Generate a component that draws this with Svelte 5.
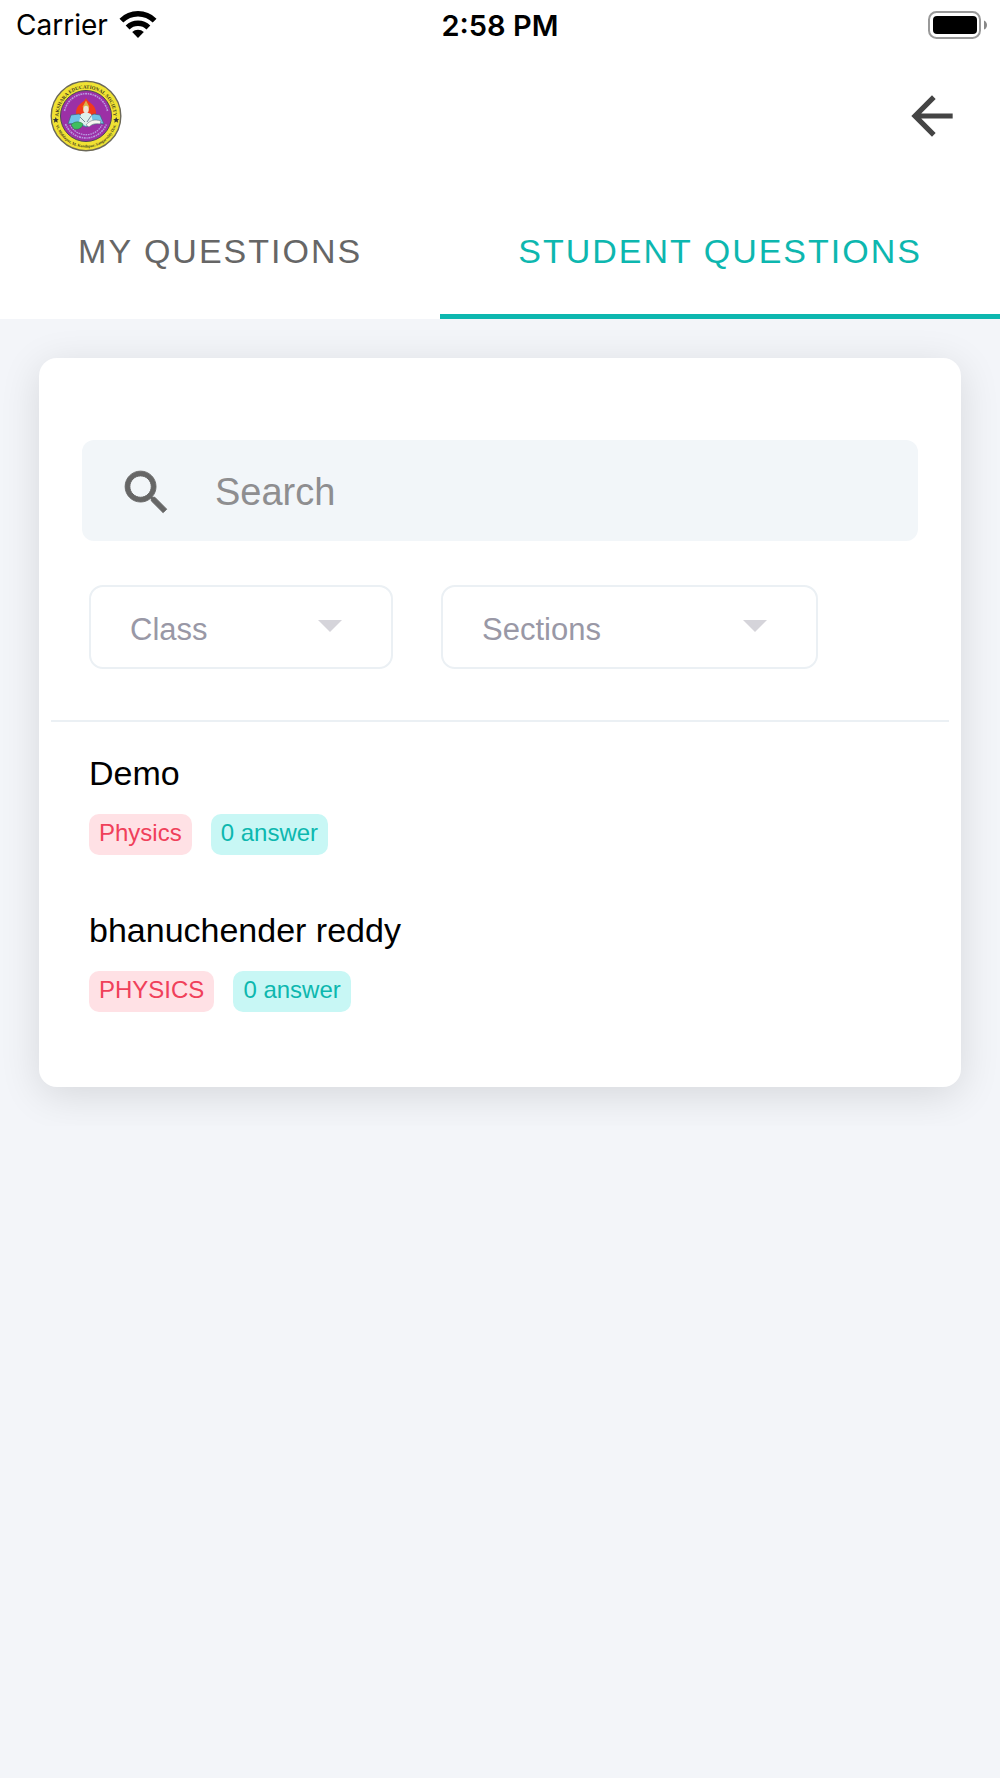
<script lang="ts">
  type Question = { id: number; student: string; subject: string; answers: number };

  const tabs = [
    { id: 'mine', label: 'My Questions' },
    { id: 'students', label: 'Student Questions' },
  ];

  const questions: Question[] = [
    { id: 1, student: 'Demo', subject: 'Physics', answers: 0 },
    { id: 2, student: 'bhanuchender reddy', subject: 'PHYSICS', answers: 0 },
  ];

  let active = $state('students');
  let search = $state('');

  const visible = $derived(
    questions.filter((q) => (q.student + ' ' + q.subject).toLowerCase().includes(search.trim().toLowerCase()))
  );
</script>

<svelte:head><title>Student Questions</title></svelte:head>

<div class="status">
  <span class="carrier">
    Carrier
    <svg width="38" height="28" viewBox="0 0 38 28" aria-hidden="true">
      <g fill="none" stroke="#000" stroke-width="5.4">
        <path d="M2.4 9.6a23.6 23.6 0 0 1 33.2 0" />
        <path d="M8.6 16.5a14.8 14.8 0 0 1 20.8 0" />
      </g>
      <path d="M19 27l-5.8-5.9a8.2 8.2 0 0 1 11.6 0z" />
    </svg>
  </span>
  <span class="time">2:58 PM</span>
  <svg class="battery" width="60" height="28" viewBox="0 0 60 28" aria-hidden="true">
    <rect x="1" y="1" width="51" height="26" rx="7.5" fill="none" stroke="#999" stroke-width="2" />
    <rect x="5" y="5" width="44" height="18" rx="4" />
    <path d="M56 9.4c4 1.6 4 7.6 0 9.2z" fill="#888" />
  </svg>
</div>

<header>
  <svg class="logo" width="72" height="72" viewBox="0 0 72 72" role="img" aria-label="Akshara Educational Society">
    <defs>
      <path id="ring-top" d="M10.5 46A27.4 27.4 0 1 1 61.5 46" />
      <path id="ring-bottom" d="M4.9 41A31.5 31.5 0 0 0 67.1 41" />
    </defs>
    <circle cx="36" cy="36" r="34.8" fill="#f0e233" stroke="#6b6859" stroke-width="1.4" />
    <circle cx="36" cy="36" r="25.5" fill="#9c30a6" stroke="#4a4a55" stroke-width="1" />
    <text class="ring big"><textPath href="#ring-top" startOffset="50%" text-anchor="middle">AKSHARA EDUCATIONAL SOCIETY</textPath></text>
    <text class="ring small"><textPath href="#ring-bottom" startOffset="50%" text-anchor="middle">Vi. Middapur, M. Kondapur, Sangareddy Dist.</textPath></text>
    <path d="M5.8 37l.9 2 2.1.2-1.6 1.4.5 2.1-1.9-1.1-1.9 1.1.5-2.1-1.6-1.4 2.1-.2z" fill="#333" />
    <path d="M66.2 37l.9 2 2.1.2-1.6 1.4.5 2.1-1.9-1.1-1.9 1.1.5-2.1-1.6-1.4 2.1-.2z" fill="#333" />
    <g fill="none" stroke="#b79be0">
      <path d="M14.5 31a22 22 0 0 1 43 0" stroke-width="1.6" stroke-dasharray="2 .8 1.2 .8" />
      <path d="M15.5 44a22 22 0 0 0 41 0" stroke-width="1.6" stroke-dasharray="2 .8 1.2 .8" />
      <path d="M20 45a18 18 0 0 0 32 0" stroke-width="1.3" stroke-dasharray="1.6 .8" />
    </g>
    <path d="M36 18c2 5 10 6 10 15 0 4-3 8-10 8s-10-4-10-8c0-9 8-10 10-15z" fill="#f23a1c" />
    <path d="M36 20.5l3.2 6-.6 5h-5.2l-.6-5z" fill="#d9b44a" />
    <path d="M21 35l8-1 7 4 8-4 6 1 4 9c-6-1-12 0-18 3-6-3-12-4-18-3z" fill="#6fc3e8" stroke="#42607c" stroke-width=".7" />
    <path d="M31 34l5-2 5 2 2 8-7 4-7-4z" fill="#dff0ec" />
    <ellipse cx="36" cy="29.5" rx="2.6" ry="3.8" fill="#efe3d8" />
    <path d="M21 45c3-4 9-4 12-1-1 4-4 6-9 5z" fill="#3fbf5f" stroke="#2f6b4a" stroke-width=".5" />
    <path d="M36 45c4-5 9-6 15-4l-1 3c-5-1-8 0-11 3z" fill="#f6f6f0" stroke="#667" stroke-width=".5" />
    <path d="M30 37l5 5M41 36l-4 6" stroke="#5a6b80" stroke-width=".8" />
  </svg>
  <button class="back" type="button" aria-label="Back">
    <svg width="62" height="62" viewBox="0 0 24 24" fill="#444" aria-hidden="true">
      <path d="M20 11H7.83l5.59-5.59L12 4l-8 8 8 8 1.41-1.41L7.83 13H20v-2z" />
    </svg>
  </button>
</header>

<div class="tabs" role="tablist">
  {#each tabs as tab}
    <button type="button" role="tab" class:active={active === tab.id} aria-selected={active === tab.id}
      onclick={() => (active = tab.id)}>{tab.label}</button>
  {/each}
</div>

<main>
  <section class="card">
    <label class="search">
      <svg width="57" height="57" viewBox="0 0 24 24" fill="#666" stroke="#666" stroke-width=".4" aria-hidden="true">
        <path d="M15.5 14h-.79l-.28-.27C15.41 12.59 16 11.11 16 9.5 16 5.91 13.09 3 9.5 3S3 5.91 3 9.5 5.91 16 9.5 16c1.61 0 3.09-.59 4.23-1.57l.27.28v.79l5 4.99L20.49 19l-4.99-5zm-6 0C7.01 14 5 11.99 5 9.5S7.01 5 9.5 5 14 7.01 14 9.5 11.99 14 9.5 14z" />
      </svg>
      <input type="text" bind:value={search} placeholder="Search" aria-label="Search" />
    </label>

    <div class="filters">
      <div class="select class">
        <select aria-label="Class"><option>Class</option></select>
        <svg width="24" height="12" viewBox="0 0 24 12" aria-hidden="true"><path d="M0 0h24L12 12z" /></svg>
      </div>
      <div class="select sections">
        <select aria-label="Sections"><option>Sections</option></select>
        <svg width="24" height="12" viewBox="0 0 24 12" aria-hidden="true"><path d="M0 0h24L12 12z" /></svg>
      </div>
    </div>

    <ul>
      {#each visible as q (q.id)}
        <li>
          <h2>{q.student}</h2>
          <div class="badges">
            <span class="badge subject">{q.subject}</span>
            <span class="badge answers">{q.answers} answer</span>
          </div>
        </li>
      {/each}
    </ul>
  </section>
</main>

<style>
  :global(body) { background: #f3f5f9; font-family: "Liberation Sans", Arial, sans-serif; }
  .status { display: grid; grid-template-columns: 1fr auto 1fr; align-items: center; height: 50px; padding: 0 12px; background: #fff; font-family: Inter, sans-serif; font-size: 28px; }
  .carrier { display: flex; align-items: center; gap: 11px; padding-left: 4px; }
  .time { font-size: 29px; font-weight: 600; }
  .battery { justify-self: end; }

  header { display: flex; justify-content: space-between; align-items: center; height: 132px; padding: 0 37px 0 50px; background: #fff; box-sizing: border-box; }
  .ring { font-family: "Liberation Serif", serif; font-weight: 700; fill: #3d3a20; }
  .big { font-size: 5px; }
  .small { font-size: 4px; }
  .back { display: flex; padding: 0; border: none; background: none; cursor: pointer; }

  .tabs { display: flex; background: #fff; position: relative; }
  .tabs button { flex: 1 1 auto; height: 137px; padding: 7px 77px 0; border: none; border-bottom: 5px solid transparent; background: none; color: #666; font: inherit; font-size: 34px; letter-spacing: 2px; text-transform: uppercase; white-space: nowrap; cursor: pointer; }
  .tabs button.active { color: #0db7af; border-color: #0db7af; }

  main { padding: 39px; }
  .card { padding: 82px 12px 46px; border-radius: 18px; background: #fff; box-shadow: 0 8px 40px rgba(0, 0, 0, 0.12); }
  .search { display: flex; align-items: center; gap: 40px; height: 101px; margin: 0 31px; padding: 0 36px; border-radius: 12px; background: #f2f6f9; }
  .search svg { flex: none; margin-top: 3px; }
  .search input { flex: 1; min-width: 0; padding: 4px 0 0; border: none; outline: none; background: none; color: #333; font: inherit; font-size: 38px; }
  .search input::placeholder { color: #8e8e90; opacity: 1; }

  .filters { display: flex; gap: 48px; padding: 44px 38px 51px; border-bottom: 2px solid #ebf0f4; }
  .select { position: relative; }
  .class { flex: 0 1 304px; }
  .sections { flex: 0 1 377px; }
  .select select { width: 100%; height: 84px; padding: 4px 80px 0 39px; border: 2px solid #ebf0f4; border-radius: 14px; background: #fff; color: #9998a6; font: inherit; font-size: 31px; appearance: none; box-sizing: border-box; }
  .select svg { position: absolute; top: 35px; right: 51px; fill: #d5d4da; pointer-events: none; }

  ul { margin: 0; padding: 31px 38px 0; list-style: none; }
  li { padding-bottom: 29px; }
  li + li { padding-top: 26px; }
  h2 { margin: 0 0 21px; color: #000; font-size: 34px; font-weight: 400; line-height: 40px; }
  .badges { display: flex; gap: 19px; }
  .badge { padding: 5px 10px 8px; border-radius: 10px; font-size: 24px; line-height: 28px; }
  .subject { background: #ffe1e5; color: #f0405a; }
  .answers { background: #c8f7f5; color: #0db7af; }
</style>
